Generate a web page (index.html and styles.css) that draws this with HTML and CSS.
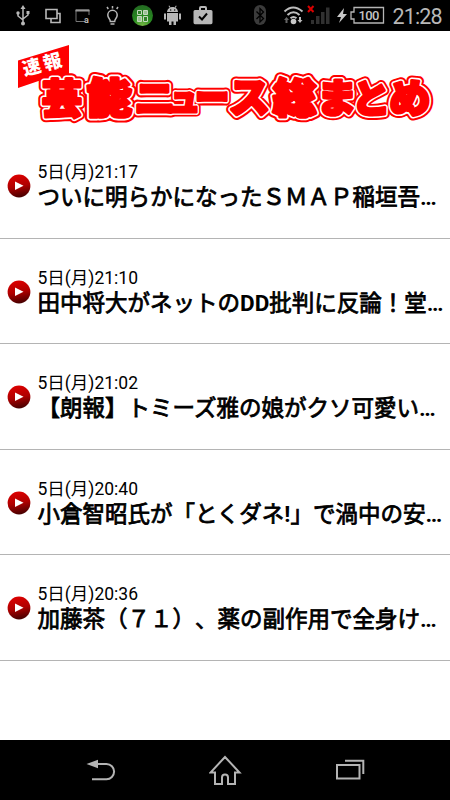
FILE: index.html
```html
<!DOCTYPE html>
<html lang="ja">
<head>
<meta charset="utf-8">
<title>芸能ニュース総まとめ</title>
<link rel="stylesheet" href="styles.css">
</head>
<body>
<div class="screen">
  <header class="status">
    <svg class="status-icons" width="450" height="31" viewBox="0 0 450 31">
      <g fill="none" stroke="#b8b8b8" stroke-width="1.5">
        <path d="M23 8v15M18 13v3l5 4M28 12v3l-5 4"/>
        <path d="M46 9.500h11v9H46zM57.500 13.500H60v9H51v-3.500" stroke-width="1.600"/>
        <path d="M85 21.500H76v-11.500h13v5" stroke="#777" stroke-width="1"/><path d="M75.500 10.500h14" stroke="#999" stroke-width="2"/>
        <path d="M110.300 21.500c0-3-2.500-3-2.500-6.500a4.700 4.700 0 0 1 9.400 0c0 3.500-2.500 3.500-2.500 6.500zM112.500 6v2.500M107 7l1.300 2M118 7l-1.300 2M110.500 24h4"/>
      </g>
      <g fill="#b8b8b8">
        <path d="M23 5l2.500 4h-5z"/><circle cx="23" cy="23.500" r="2"/><circle cx="18" cy="13" r="1.700"/><path d="M26.500 11h3v3h-3z"/>
        <path d="M167 13h11v8.500h-2V25h-2.500v-3.500h-2V25H169v-3.500h-2zM164 13.500h2v6h-2zM179 13.500h2v6h-2zM167 12c.3-2.200 1.300-3.500 2.700-4.300L168.500 6l.8-.4 1.300 1.800c1.400-.4 2.600-.4 4 0l1.300-1.800.8.400-1.200 1.700c1.400.8 2.300 2.100 2.500 4.300z"/>
        <path d="M195 10h4V8q0-2 2-2h4q2 0 2 2v2h4q1.500 0 1.500 1.500v11q0 1.800-1.500 1.800h-16q-1.500 0-1.500-1.800v-11Q193.500 10 195 10zM201 10h4V8h-4z" fill-rule="evenodd"/>
      </g>
      <text x="84" y="23" class="tiny">a</text>
      <path d="M199 16.500l3 3 5-6" fill="none" stroke="#000" stroke-width="2"/>
      <circle cx="170.700" cy="10" r=".7"/><circle cx="174.700" cy="10" r=".7"/>
      <defs>
        <radialGradient id="green" cx=".5" cy="1" r=".95"><stop offset="0" stop-color="#79b946"/><stop offset=".5" stop-color="#278a20"/><stop offset="1" stop-color="#246c22"/></radialGradient>
        <linearGradient id="ball" x1=".4" y1="0" x2=".6" y2="1"><stop offset="0" stop-color="#dc0000"/><stop offset=".5" stop-color="#b00000"/><stop offset="1" stop-color="#420000"/></linearGradient>
      </defs>
      <circle cx="142.500" cy="15.500" r="10.500" fill="url(#green)"/>
      <g stroke="#c5d8bf" stroke-width="1"><path d="M137.500 10.500h4v4h-4zM143.500 16.500h4v5h-4z" fill="#31832a"/><path d="M143.500 10.500h4v4h-4zM137.500 16.500h4v5h-4z" fill="#9dc197"/></g>
      <rect x="254" y="5" width="12" height="20" rx="6" fill="#3b3b3b"/>
      <path d="M256.500 11.500l7 7-3.500 3.500V8.500l3.500 3.500-7 7" fill="none" stroke="#000" stroke-width="1.300"/>
      <g fill="none" stroke="#bdbdbd" stroke-width="2"><path d="M284.500 11.500q8.500-8 18 0M287.500 15q6-5.500 12 0M290.500 18.300q3-2.500 6 0"/></g>
      <circle cx="293.500" cy="21.500" r="2.800" fill="#c8c8c8"/>
      <path d="M286.500 17l2.500 3h-1.500v3h-2v-3H284z" fill="#666"/><path d="M300 23l2.500-3H301v-3h-2v3h-1.500z" fill="#bbb"/>
      <path d="M308 6l5.500 6M313.500 6l-5.500 6" stroke="#d90000" stroke-width="2"/>
      <path d="M311 20h3v4h-3zM316 16h3.500v8H316zM321 12h3.500v12H321zM326 7.500h3.500V24H326z" fill="#303030"/>
      <path d="M344 8l-7 9h4l-2 6 8-9h-4z" fill="#c8c8c8"/>
      <path d="M354 7.500h29.500v15.500H354v-4h-3v-7h3z" fill="none" stroke="#b5b5b5" stroke-width="1.300"/>
      <text x="358.500" y="20.300" class="battery" textLength="21">100</text>
      <text x="392.500" y="23.500" class="clock" textLength="50">21:28</text>
    </svg>
  </header>

  <main>
    <svg class="logo" width="450" height="102" viewBox="0 31 450 102">
      <defs>
        <g id="word" class="word">
          <text transform="translate(42 113) scale(1 1)">芸</text>
          <text transform="translate(87 113) scale(1.120 1.020)">能</text>
          <text transform="translate(134.500 112.500) scale(1.020 1)">ニ</text>
          <text transform="translate(168 111) scale(.820 .850)">ュ</text>
          <text transform="translate(195 112) scale(.860 1)">ー</text>
          <text transform="translate(229 112) scale(1.020 1)">ス</text>
          <text transform="translate(273 113) scale(1.080 1.020)">総</text>
          <text transform="translate(317 111.500) scale(1 .960)">ま</text>
          <text transform="translate(352 111.500) scale(.960 .950)">と</text>
          <text transform="translate(389.500 112) scale(1.020 .960)">め</text>
        </g>
      </defs>
      <use href="#word" class="outer"/>
      <path d="M18 60.500L69 45v29l-29 6.500-22 7.500z" fill="#f00"/>
      <text class="flag" transform="translate(24.500 76) rotate(-15)" textLength="40">速報</text>
      <use href="#word" class="middle"/>
      <use href="#word" class="inner"/>
    </svg>

    <ul class="news">
      <li class="item"><svg class="bullet" viewBox="0 0 24 24"><circle cx="12" cy="12" r="11.400" fill="url(#ball)"/><path d="M8 7.500l8.500 4.300L8 16z" fill="#fff"/></svg><div class="body"><time class="date">5日(月)21:17</time><div class="title">ついに明らかになったＳＭＡＰ稲垣吾<b>…</b></div></div></li>
      <li class="item"><svg class="bullet" viewBox="0 0 24 24"><circle cx="12" cy="12" r="11.400" fill="url(#ball)"/><path d="M8 7.500l8.500 4.300L8 16z" fill="#fff"/></svg><div class="body"><time class="date">5日(月)21:10</time><div class="title">田中将大がネットの<b>DD</b>批判に反論！堂<b>…</b></div></div></li>
      <li class="item"><svg class="bullet" viewBox="0 0 24 24"><circle cx="12" cy="12" r="11.400" fill="url(#ball)"/><path d="M8 7.500l8.500 4.300L8 16z" fill="#fff"/></svg><div class="body"><time class="date">5日(月)21:02</time><div class="title">【朗報】トミーズ雅の娘がクソ可愛い<b>…</b></div></div></li>
      <li class="item"><svg class="bullet" viewBox="0 0 24 24"><circle cx="12" cy="12" r="11.400" fill="url(#ball)"/><path d="M8 7.500l8.500 4.300L8 16z" fill="#fff"/></svg><div class="body"><time class="date">5日(月)20:40</time><div class="title">小倉智昭氏が「とくダネ<b>!</b>」で渦中の安<b>…</b></div></div></li>
      <li class="item"><svg class="bullet" viewBox="0 0 24 24"><circle cx="12" cy="12" r="11.400" fill="url(#ball)"/><path d="M8 7.500l8.500 4.300L8 16z" fill="#fff"/></svg><div class="body"><time class="date">5日(月)20:36</time><div class="title">加藤茶（７１）、薬の副作用で全身け<b>…</b></div></div></li>
    </ul>
  </main>

  <nav class="navbar">
    <svg width="30" height="30" viewBox="0 0 30 30"><path d="M10 9h10.500a7.600 7.600 0 0 1 0 15.200H6" fill="none" stroke="#b4b4b4" stroke-width="2"/><path d="M.5 9l11.500-4.300v8.600z" fill="#b4b4b4"/></svg>
    <svg width="34" height="30" viewBox="1 0 34 30"><path d="M17 2L2.500 17.500H7V29h7v-6.500a3 3 0 0 1 6 0V29h7V17.500h4.500z" fill="none" stroke="#b4b4b4" stroke-width="2"/></svg>
    <svg width="30" height="30" viewBox="0 0 30 30"><path d="M2 10h22.500v13.500H2zM10 5.800h18.300V19" fill="none" stroke="#b4b4b4" stroke-width="2"/></svg>
  </nav>
</div>
</body>
</html>
```
FILE: styles.css
```css
* { box-sizing: border-box; }
body { margin: 0; background: #fff; color: #000; font-family: Roboto, "Noto Sans CJK JP", sans-serif; text-spacing-trim: space-all; }
.screen { width: 450px; height: 800px; display: flex; flex-direction: column; overflow: hidden; }
.status { height: 31px; background: #000; }
.status-icons, .logo { display: block; }
.tiny { font: bold 9px Roboto, sans-serif; fill: #b8b8b8; }
.battery { font: 500 13px Roboto, sans-serif; fill: #c4c4c4; }
.clock { font: 400 21.500px Roboto, sans-serif; fill: #b8b8b8; }
main { flex: 1; background: #fff; }
.word { font: 900 40px "Noto Sans CJK JP", sans-serif; stroke-linejoin: round; }
.outer { fill: #f00; stroke: #f00; stroke-width: 10.500px; }
.middle { fill: #fff; stroke: #fff; stroke-width: 6.400px; }
.inner { fill: #f00; stroke: #f00; stroke-width: 3.200px; }
.flag { font: 900 18.500px "Noto Sans CJK JP", sans-serif; fill: #fff; }
.news { list-style: none; margin: 0; padding: 0; }
.item { height: 105.500px; display: flex; gap: 6.500px; padding: 28px 0 0 7px; border-bottom: 1px solid #b4b4b4; }
.bullet { width: 24px; height: 24px; flex: none; margin-top: 13px; }
.body { white-space: nowrap; }
.date { display: block; font-size: 17.500px; line-height: 22px; height: 21px; }
.title { font-size: 22.500px; line-height: 30px; height: 30px; -webkit-text-stroke: .8px #000; }
.title b { font-weight: 700; -webkit-text-stroke: 0; }
.navbar { height: 60px; background: #000; display: flex; justify-content: space-between; align-items: center; padding: 0 85px 0 86px; }
```
